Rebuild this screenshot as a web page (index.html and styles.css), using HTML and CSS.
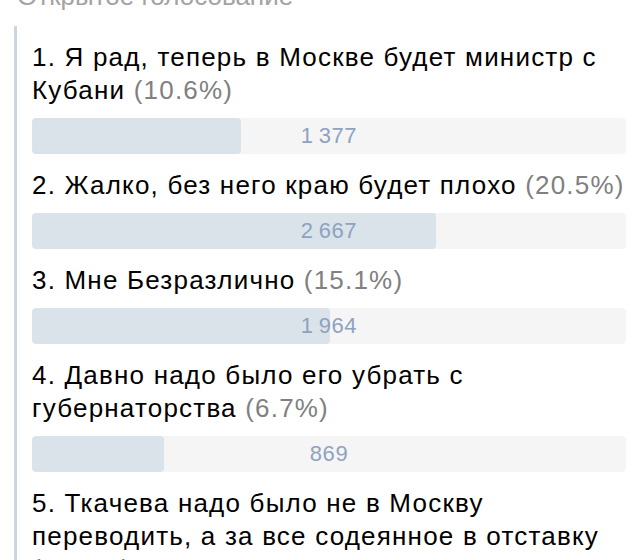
FILE: index.html
```html
<!DOCTYPE html>
<html lang="ru">
<head>
    <meta charset="UTF-8">
    <meta name="viewport" content="width=device-width, initial-scale=1.0">
    <title>Открытое голосование</title>
    <link rel="stylesheet" href="styles.css">
</head>
<body>
    <div class="poll-title">Открытое голосование</div>

    <div class="poll">

        <div class="option">
            <div class="option-text">1. Я рад, теперь в Москве будет министр с Кубани <span class="percent">(10.6%)</span></div>
            <div class="bar">
                <div class="bar-fill" style="width: 35.2%"></div>
                <div class="bar-count">1&thinsp;377</div>
            </div>
        </div>

        <div class="option">
            <div class="option-text">2. Жалко, без него краю будет плохо <span class="percent">(20.5%)</span></div>
            <div class="bar">
                <div class="bar-fill" style="width: 68%"></div>
                <div class="bar-count">2&thinsp;667</div>
            </div>
        </div>

        <div class="option">
            <div class="option-text">3. Мне Безразлично <span class="percent">(15.1%)</span></div>
            <div class="bar">
                <div class="bar-fill" style="width: 50.1%"></div>
                <div class="bar-count">1&thinsp;964</div>
            </div>
        </div>

        <div class="option">
            <div class="option-text">4. Давно надо было его убрать с губернаторства <span class="percent">(6.7%)</span></div>
            <div class="bar">
                <div class="bar-fill" style="width: 22.2%"></div>
                <div class="bar-count">869</div>
            </div>
        </div>

        <div class="option">
            <div class="option-text">5. Ткачева надо было не в Москву переводить, а за все содеянное в отставку <span class="percent">(30.2%)</span></div>
            <div class="bar">
                <div class="bar-fill" style="width: 100%"></div>
                <div class="bar-count">3&thinsp;923</div>
            </div>
        </div>

    </div>
</body>
</html>
```

FILE: styles.css
```css
body {
    margin: 0;
    padding: 0 14px 20px;
    font-family: "Liberation Sans", Arial, sans-serif;
    background-color: #fff;
    color: #000;
}
.poll-title {
    margin: -20px 0 0 3px;
    font-size: 26px;
    line-height: 32px;
    color: #a3a3a3;
}
.poll {
    margin-top: 14px;
    border-left: 3px solid #cbd6e2;
    padding-left: 15px;
}
.option {
    padding-top: 15px;
}
.option-text {
    font-size: 26px;
    line-height: 33px;
    letter-spacing: 1.2px;
    margin-bottom: 11px;
}
.percent {
    color: #808080;
}
.bar {
    position: relative;
    height: 36px;
    border-radius: 4px;
    background-color: #f5f5f5;
    overflow: hidden;
}
.bar-fill {
    height: 100%;
    border-radius: 4px;
    background-color: #dae2ea;
}
/* число голосов поверх полосы, по центру */
.bar-count {
    position: absolute;
    top: 0;
    left: 0;
    right: 0;
    text-align: center;
    font-size: 22px;
    letter-spacing: 0.6px;
    line-height: 36px;
    color: #8ea3bf;
}
```
